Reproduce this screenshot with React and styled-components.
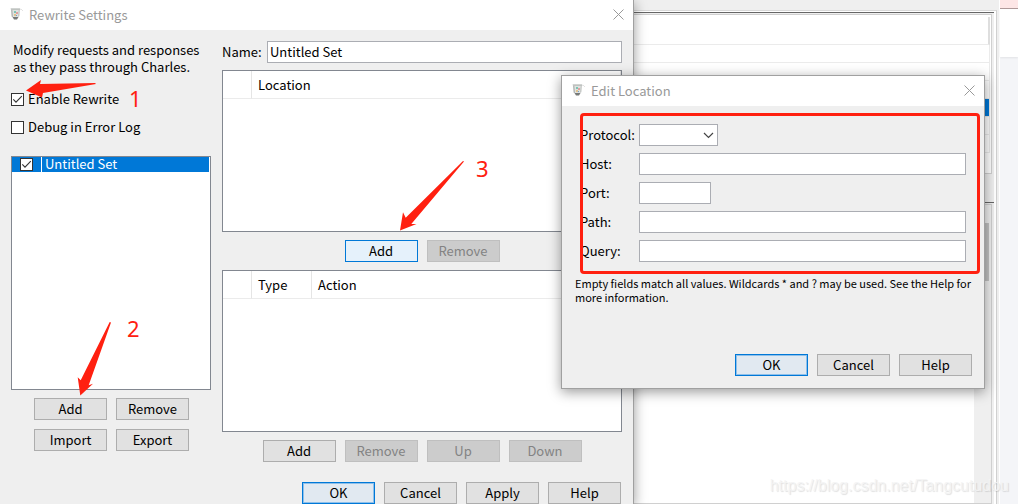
import React, { useState } from 'react';
import styled, { createGlobalStyle, css } from 'styled-components';

const GlobalStyle = createGlobalStyle`
    * {
        box-sizing: border-box;
    }

    body {
        margin: 0;
        overflow: hidden;
        color: #000;
        font-family: "Noto Sans CJK SC", "Noto Sans", sans-serif;
        font-size: 13px;
        line-height: 17px;
    }

    button, input, select {
        font: inherit;
        color: inherit;
    }
`;

const Desktop = styled.main`
    position: relative;
    display: flex;
    height: 100vh;
    overflow: hidden;
    background: #efefef;
`;

/* main window behind the dialogs */

const Background = styled.div`
    flex: 1;
    display: flex;
    flex-direction: column;
    padding: 10px 2px 0 0;
    border-right: 1px solid #fff;
`;

const BackFrame = styled.div`
    flex: 1;
    display: flex;
    flex-direction: column;
    border-top: 1px solid #d8d8d8;
    border-right: 1px solid #d0d0d0;
    padding: 1px 2px 0 0;
    background: #fff;
`;

const BackPane = styled.section`
    display: flex;
    flex-direction: column;
    height: ${({ $fill }) => ($fill ? 'auto' : '190px')};
    flex: ${({ $fill }) => ($fill ? 1 : 'none')};
    padding: 1px 2px 0 0;
    border-top: 1px solid #666;
    background: #efefef;
`;

const BackList = styled.div`
    height: 160px;
    padding: 2px 1px 0 0;
    border: 1px solid #d0d0d0;
    background: #fff;
`;

const BackHeader = styled.div`
    height: 28px;
    border-right: 2px solid #dedede;
    border-bottom: 1px solid #ebebeb;
`;

const BackRow = styled.div`
    height: 18px;
    border-right: 1px solid #ebebeb;
    border-bottom: 1px solid #ebebeb;
    background: ${({ $selected }) => ($selected ? '#0078d7' : '#fff')};
`;

const BackScroll = styled.div`
    flex: 1;
    display: flex;
    justify-content: flex-end;
    border: 1px solid #d0d0d0;
    background: #fff;
`;

const ScrollTrack = styled.div`
    width: 17px;
    padding: 18px 2px 0 0;
    background: #efefef;
`;

const ScrollThumb = styled.div`
    height: 58px;
    background: #c2c2c2;
`;

const SideStrip = styled.div`
    width: 18px;
    background: #f4f5f8;
`;

const StripTab = styled.div`
    height: 9px;
    background: #fde6e6;
    border-bottom: 1px solid #b09a9a;
`;

const StripBar = styled.div`
    height: 48px;
    background: #fff;
    box-shadow: 0 1px 2px rgba(0, 0, 0, 0.08);
`;

/* windows */

const Window = styled.section`
    position: absolute;
    background: #efefef;
    box-shadow: 0 3px 12px rgba(0, 0, 0, 0.4);
`;

const SettingsWindow = styled(Window)`
    top: 0;
    left: 0;
    width: 634px;
    min-height: 100%;
    border-right: 1px solid #a0a0a0;
`;

const LocationWindow = styled(Window)`
    top: 75px;
    left: 561px;
    width: 424px;
    border: 1px solid #a0a0a0;
`;

const TitleBar = styled.header`
    display: flex;
    align-items: center;
    gap: 5px;
    height: 30px;
    padding: 0 9px 2px;
    background: #fff;
    color: #999;
`;

const Title = styled.h1`
    flex: 1;
    margin: 0;
    font-size: 13px;
    font-weight: 400;
`;

const CloseButton = styled.button`
    display: flex;
    padding: 0;
    border: 0;
    background: none;
    color: #999;
`;

const SettingsBody = styled.div`
    display: flex;
    gap: 11px;
    padding: 11px 11px 0;
`;

const LeftColumn = styled.div`
    width: 200px;
`;

const RightColumn = styled.div`
    flex: 1;
`;

const Intro = styled.p`
    margin: 0;
    padding: 0 0 16px 2px;
`;

const CheckLabel = styled.label`
    display: flex;
    align-items: center;
    gap: 4px;
    height: 17px;
    margin-bottom: 11px;
`;

const CheckText = styled.span`
    padding-bottom: 2px;
`;

const CheckHolder = styled.span`
    position: relative;
    display: flex;
    width: 13px;
    height: 13px;

    svg {
        position: absolute;
        inset: 0;
        pointer-events: none;
    }
`;

const CheckInput = styled.input`
    appearance: none;
    width: 13px;
    height: 13px;
    margin: 0;
    border: 1px solid #333;
    background: #fff;
`;

const SetList = styled.ul`
    height: 234px;
    margin: 20px 0 0;
    padding: 0 1px 0 0;
    list-style: none;
    border: 1px solid #828790;
    background: #fff;
`;

const SetItem = styled.li`
    display: flex;
    height: 15px;
    line-height: 13px;
    background: #0078d7;
    color: #fff;

    label {
        padding-left: 3px;
    }
`;

const SetCheckCell = styled.span`
    display: flex;
    justify-content: center;
    align-items: center;
    width: 30px;
    border-right: 1px solid #fff;
`;

const ButtonRow = styled.div`
    display: flex;
    justify-content: ${({ $align }) => $align || 'center'};
    gap: 9px;
    padding-top: 8px;
`;

const SetButtons = styled.div`
    display: grid;
    grid-template-columns: 73px 73px;
    gap: 9px;
    padding: 8px 0 0 23px;
`;

const DialogButtons = styled(ButtonRow)`
    padding: 20px 1px 0 0;
`;

const Button = styled.button`
    width: 73px;
    height: 22px;
    padding: 0;
    border: 1px solid #adadad;
    background: #e1e1e1;
    line-height: 20px;

    &:disabled {
        border-color: #bfbfbf;
        background: #ccc;
        color: #838383;
    }

    ${({ $focused }) => $focused && css`
        border-color: #0078d7;
        box-shadow: inset 0 0 0 1px #8fc0ea;
        background: #e1e9f1;
    `}

    ${({ $hovered }) => $hovered && css`
        border-color: #0078d7;
        background: #e5f1fb;
    `}
`;

const NameRow = styled.label`
    display: flex;
    align-items: center;
    margin-bottom: 7px;
`;

const NameText = styled.span`
    width: 45px;
    padding-bottom: 2px;
`;

const TextInput = styled.input`
    flex: ${({ $width }) => ($width ? 'none' : 1)};
    width: ${({ $width }) => $width || 'auto'};
    min-width: 0;
    height: 22px;
    padding: 0 2px 2px;
    border: 1px solid #abadb3;
    background: #fff;
    outline: none;
`;

const TableBox = styled.div`
    height: 162px;
    border: 1px solid #828790;
    background: #fff;
`;

const Table = styled.table`
    width: 100%;
    table-layout: fixed;
    border-collapse: separate;
    border-spacing: 0;
`;

const HeadCell = styled.th`
    width: ${({ $width }) => $width || 'auto'};
    height: 28px;
    padding: 0 0 0 6px;
    border-right: 1px solid #e5e5e5;
    border-bottom: 1px solid #ebebeb;
    font-weight: 400;
    text-align: left;
`;

const LocationButtons = styled(ButtonRow)`
    padding-bottom: 8px;
`;

const LocationBody = styled.div`
    padding: 18px 12px 12px 13px;
`;

const Fields = styled.div`
    display: flex;
    flex-direction: column;
    gap: 7px;
    padding: 0 6px 0 5px;
`;

const Field = styled.label`
    display: flex;
    align-items: center;
    height: 22px;
`;

const FieldName = styled.span`
    width: 59px;
    padding-bottom: 2px;
`;

const SelectHolder = styled.span`
    position: relative;
    display: flex;

    svg {
        position: absolute;
        top: 8px;
        right: 4px;
        pointer-events: none;
    }
`;

const Select = styled.select`
    appearance: none;
    width: 79px;
    height: 22px;
    border: 1px solid #abadb3;
    border-radius: 0;
    background: #fff;
`;

const Hint = styled.p`
    margin: 14px 0 42px;
    font-size: 11px;
    line-height: 14px;
`;

/* red marks on top of the windows */

const Frame = styled.div`
    position: absolute;
    top: 37px;
    left: 18px;
    right: 4px;
    height: 161px;
    border: 3px solid #ff2010;
    border-radius: 4px;
    pointer-events: none;
`;

const ArrowSvg = styled.svg`
    position: absolute;
    top: ${({ $top }) => $top}px;
    left: ${({ $left }) => $left}px;
    fill: #ff2010;
    pointer-events: none;
`;

const Step = styled.span`
    position: absolute;
    top: ${({ $top }) => $top}px;
    left: ${({ $left }) => $left}px;
    color: #ff2010;
    font-family: "Noto Sans", sans-serif;
    font-size: 22px;
    line-height: 24px;
`;

const Watermark = styled.span`
    position: absolute;
    right: 9px;
    bottom: 8px;
    color: rgba(244, 244, 244, 0.9);
    font-family: "Liberation Sans", sans-serif;
    font-size: 16px;
    line-height: 20px;
    text-shadow: 1px 1px 1px rgba(0, 0, 0, 0.12);
`;

const JugIcon = () => (
    <svg width="15" height="14" viewBox="0 0 15 14" aria-hidden="true">
        <path d="M10 3 Q12 0.5 14 4" fill="none" stroke="#e2e2e2" />
        <path d="M2 1.5 H11 L10.5 9 L8.5 11 H4.5 L2.5 9 Z" fill="#dfe2e0" />
        <path d="M1.5 1.5 H11 V2.7 H2 Z" fill="#b4b8b6" />
        <path d="M2.8 3 L3.3 10" stroke="#a5a8a6" fill="none" />
        <path d="M10.2 3 L9.6 9.5" stroke="#c2c4c3" fill="none" />
        <rect x="5" y="4" width="2" height="2" fill="#7cc4b4" />
        <rect x="7" y="5" width="2" height="2" fill="#e2a0a0" />
        <rect x="5" y="7" width="2" height="2" fill="#e3c48c" />
        <rect x="7" y="8" width="1" height="1" fill="#6f9fd0" />
        <path d="M3.5 10 H9.5 L8 12.5 H5 Z" fill="#777a78" />
    </svg>
);

const CloseIcon = () => (
    <svg width="11" height="11" viewBox="0 0 11 11" aria-hidden="true">
        <path d="M0.5 0.5 L10.5 10.5 M10.5 0.5 L0.5 10.5" stroke="currentColor" fill="none" />
    </svg>
);

const WindowTitle = ({ children }) => (
    <TitleBar>
        <JugIcon />
        <Title>{children}</Title>
        <CloseButton type="button" aria-label="Close"><CloseIcon /></CloseButton>
    </TitleBar>
);

const Checkbox = ({ id, initial }) => {
    const [checked, setChecked] = useState(Boolean(initial));

    return (
        <CheckHolder>
            <CheckInput id={id} type="checkbox" checked={checked} onChange={e => setChecked(e.target.checked)} />
            {checked && (
                <svg width="13" height="13" viewBox="0 0 13 13" aria-hidden="true">
                    <path d="M2.3 6.3 L5 9.2 L10.8 3.2" stroke="#333" strokeWidth="1.1" fill="none" />
                </svg>
            )}
        </CheckHolder>
    );
};

const RewriteSettings = () => (
    <SettingsWindow>
        <WindowTitle>Rewrite Settings</WindowTitle>
        <SettingsBody>
            <LeftColumn>
                <Intro>Modify requests and responses<br />as they pass through Charles.</Intro>
                <CheckLabel htmlFor="enable">
                    <Checkbox id="enable" initial />
                    <CheckText>Enable Rewrite</CheckText>
                </CheckLabel>
                <CheckLabel htmlFor="debug">
                    <Checkbox id="debug" />
                    <CheckText>Debug in Error Log</CheckText>
                </CheckLabel>
                <SetList>
                    <SetItem>
                        <SetCheckCell><Checkbox id="set" initial /></SetCheckCell>
                        <label htmlFor="set">Untitled Set</label>
                    </SetItem>
                </SetList>
                <SetButtons>
                    <Button>Add</Button>
                    <Button>Remove</Button>
                    <Button>Import</Button>
                    <Button>Export</Button>
                </SetButtons>
            </LeftColumn>
            <RightColumn>
                <NameRow><NameText>Name:</NameText><TextInput defaultValue="Untitled Set" /></NameRow>
                <TableBox>
                    <Table>
                        <thead>
                            <tr><HeadCell $width="29px" /><HeadCell>Location</HeadCell></tr>
                        </thead>
                    </Table>
                </TableBox>
                <LocationButtons>
                    <Button $hovered>Add</Button>
                    <Button disabled>Remove</Button>
                </LocationButtons>
                <TableBox>
                    <Table>
                        <thead>
                            <tr>
                                <HeadCell $width="29px" />
                                <HeadCell $width="60px">Type</HeadCell>
                                <HeadCell>Action</HeadCell>
                            </tr>
                        </thead>
                    </Table>
                </TableBox>
                <ButtonRow>
                    <Button>Add</Button>
                    <Button disabled>Remove</Button>
                    <Button disabled>Up</Button>
                    <Button disabled>Down</Button>
                </ButtonRow>
                <DialogButtons $align="flex-end">
                    <Button $focused>OK</Button>
                    <Button>Cancel</Button>
                    <Button>Apply</Button>
                    <Button>Help</Button>
                </DialogButtons>
            </RightColumn>
        </SettingsBody>
    </SettingsWindow>
);

const EditLocation = () => (
    <LocationWindow>
        <WindowTitle>Edit Location</WindowTitle>
        <LocationBody>
            <Fields>
                <Field>
                    <FieldName>Protocol:</FieldName>
                    <SelectHolder>
                        <Select defaultValue="">
                            <option value="" />
                            <option value="http">http</option>
                            <option value="https">https</option>
                        </Select>
                        <svg width="11" height="7" viewBox="0 0 11 7" aria-hidden="true">
                            <path d="M1 1 L5.5 5.5 L10 1" stroke="#444" strokeWidth="1.2" fill="none" />
                        </svg>
                    </SelectHolder>
                </Field>
                <Field><FieldName>Host:</FieldName><TextInput /></Field>
                <Field><FieldName>Port:</FieldName><TextInput $width="72px" /></Field>
                <Field><FieldName>Path:</FieldName><TextInput /></Field>
                <Field><FieldName>Query:</FieldName><TextInput /></Field>
            </Fields>
            <Hint>
                Empty fields match all values. Wildcards * and ? may be used. See the Help for
                more information.
            </Hint>
            <ButtonRow $align="flex-end">
                <Button $focused>OK</Button>
                <Button>Cancel</Button>
                <Button>Help</Button>
            </ButtonRow>
        </LocationBody>
        <Frame />
    </LocationWindow>
);

const App = () => (
    <>
        <GlobalStyle />
        <Desktop>
            <Background>
                <BackFrame>
                    <BackPane>
                        <BackList>
                            <BackHeader />
                            <BackRow />
                            <BackRow />
                            <BackRow />
                            <BackRow $selected />
                            <BackRow />
                            <BackRow />
                        </BackList>
                    </BackPane>
                    <BackPane $fill>
                        <BackScroll>
                            <ScrollTrack><ScrollThumb /></ScrollTrack>
                        </BackScroll>
                    </BackPane>
                </BackFrame>
            </Background>
            <SideStrip>
                <StripTab />
                <StripBar />
            </SideStrip>

            <RewriteSettings />
            <EditLocation />

            <ArrowSvg $left={26} $top={80} width="71" height="18" viewBox="0 0 71 18">
                <path d="M0 10.5 L15 0 L14 4 L69 3 L70 4 L17 13 L16 17.5 Z" />
            </ArrowSvg>
            <ArrowSvg $left={77} $top={322} width="35" height="74" viewBox="0 0 35 74">
                <path d="M3.3 73.5 L0.7 55.3 L3.7 58.3 L32.7 0 L34 0.5 L11.7 63.3 L16 61.7 Z" />
            </ArrowSvg>
            <ArrowSvg $left={400} $top={161} width="65" height="70" viewBox="0 0 65 70">
                <path d="M0 69.5 L3 51.3 L5.7 56.7 L63 0 L64 0.5 L11.3 63 L16.5 63 Z" />
            </ArrowSvg>
            <Step $left={129} $top={86}>1</Step>
            <Step $left={127} $top={316}>2</Step>
            <Step $left={476} $top={156}>3</Step>
            <Watermark>https://blog.csdn.net/Tangcutudou</Watermark>
        </Desktop>
    </>
);

export default App;
